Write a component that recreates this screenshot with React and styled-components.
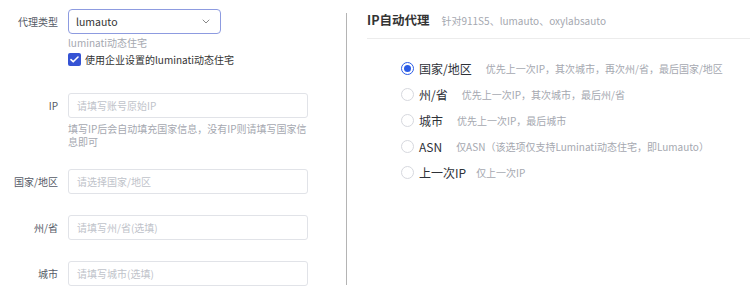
import React from 'react';
import styled, { createGlobalStyle } from 'styled-components';

const GlobalStyle = createGlobalStyle`
  html, body {
    margin: 0;
    padding: 0;
    background: #fff;
  }
  body {
    font-family: "Noto Sans CJK SC", "Noto Sans", sans-serif;
    color: #333;
  }
`;

const Page = styled.div`
  display: flex;
  width: 750px;
  height: 301px;
  box-sizing: border-box;
  overflow: hidden;
`;

const LeftPane = styled.div`
  width: 346px;
  padding-top: 9px;
  box-sizing: border-box;
`;

const Divider = styled.div`
  width: 1px;
  margin: 13px 0 16px 0;
  background: #b4b4b4;
`;

const RightPane = styled.div`
  flex: 1;
  padding-left: 20px;
  padding-top: 10px;
`;

const FormItem = styled.div`
  display: flex;
  align-items: flex-start;
  margin-bottom: ${(p) => p.$gap || 21}px;
`;

const Label = styled.div`
  width: 58px;
  flex: none;
  padding-right: 10px;
  box-sizing: content-box;
  text-align: right;
  font-size: 10px;
  line-height: 25px;
  color: #555a66;
`;

const Control = styled.div`
  width: 240px;
`;

const Select = styled.div`
  width: 153px;
  height: 25px;
  box-sizing: border-box;
  border: 1px solid #8d9be0;
  border-radius: 4px;
  display: flex;
  align-items: center;
  justify-content: space-between;
  padding: 0 10px 0 7px;
  font-size: 10.5px;
  color: #333;
`;

const Input = styled.div`
  width: 240px;
  height: 25px;
  box-sizing: border-box;
  border: 1px solid #e1e3e8;
  border-radius: 3px;
  padding: 0 8px;
  display: flex;
  align-items: center;
  font-size: 10px;
  color: #c0c3ca;
`;

const Hint = styled.div`
  margin-top: ${(p) => p.$top || 2}px;
  font-size: 10px;
  line-height: 13.5px;
  color: #a5a8b0;
`;

const CheckRow = styled.label`
  margin-top: 3px;
  margin-bottom: 4px;
  display: flex;
  align-items: center;
  gap: 4px;
  font-size: 10px;
  line-height: 14px;
  color: #333;
`;

const CheckBox = styled.span`
  width: 13px;
  height: 13px;
  border-radius: 2px;
  background: #3553d4;
  display: flex;
  align-items: center;
  justify-content: center;
`;

const Header = styled.div`
  display: flex;
  align-items: baseline;
  gap: 12px;
  padding-bottom: 9px;
  border-bottom: 1px solid #ececec;
`;

const Title = styled.div`
  font-size: 12.5px;
  font-weight: 600;
  color: #333;
`;

const SubTitle = styled.div`
  font-size: 10px;
  color: #a5a8b0;
`;

const RadioList = styled.div`
  padding: 20px 0 0 34px;
  display: flex;
  flex-direction: column;
  gap: 7px;
`;

const RadioRow = styled.div`
  display: flex;
  align-items: center;
  height: 19px;
`;

const RadioDot = styled.span`
  width: 13px;
  height: 13px;
  box-sizing: border-box;
  border-radius: 50%;
  border: 1px solid ${(p) => (p.$checked ? '#2b5ce6' : '#d6d8de')};
  display: flex;
  align-items: center;
  justify-content: center;
  margin-right: 5px;
  &::after {
    content: '';
    width: 7px;
    height: 7px;
    border-radius: 50%;
    background: ${(p) => (p.$checked ? '#2b5ce6' : 'transparent')};
  }
`;

const RadioLabel = styled.span`
  font-size: 12px;
  color: #2e3138;
  margin-right: ${(p) => p.$space}px;
`;

const RadioDesc = styled.span`
  font-size: 10px;
  color: #a5a8b0;
`;

const options = [
  { label: '国家/地区', desc: '优先上一次IP，其次城市，再次州/省，最后国家/地区', checked: true, space: 14 },
  { label: '州/省', desc: '优先上一次IP，其次城市，最后州/省', space: 14 },
  { label: '城市', desc: '优先上一次IP，最后城市', space: 14 },
  { label: 'ASN', desc: '仅ASN（该选项仅支持Luminati动态住宅，即Lumauto）', space: 14 },
  { label: '上一次IP', desc: '仅上一次IP', space: 10 },
];

function Chevron() {
  return (
    <svg width="8" height="5" viewBox="0 0 8 5" fill="none">
      <path d="M1 1l3 3 3-3" stroke="#888" strokeWidth="1" strokeLinecap="round" strokeLinejoin="round" />
    </svg>
  );
}

export default function App() {
  return (
    <Page>
      <GlobalStyle />
      <LeftPane>
        <FormItem $gap={22}>
          <Label>代理类型</Label>
          <Control>
            <Select>
              <span>lumauto</span>
              <Chevron />
            </Select>
            <Hint>luminati动态住宅</Hint>
            <CheckRow>
              <CheckBox>
                <svg width="9" height="7" viewBox="0 0 9 7" fill="none">
                  <path d="M1 3.6l2.2 2.2L8 1" stroke="#fff" strokeWidth="1.6" strokeLinecap="round" strokeLinejoin="round" />
                </svg>
              </CheckBox>
              使用企业设置的luminati动态住宅
            </CheckRow>
          </Control>
        </FormItem>
        <FormItem $gap={20}>
          <Label>IP</Label>
          <Control>
            <Input>请填写账号原始IP</Input>
            <Hint $top={4}>填写IP后会自动填充国家信息，没有IP则请填写国家信息即可</Hint>
          </Control>
        </FormItem>
        <FormItem>
          <Label>国家/地区</Label>
          <Input>请选择国家/地区</Input>
        </FormItem>
        <FormItem>
          <Label>州/省</Label>
          <Input>请填写州/省(选填)</Input>
        </FormItem>
        <FormItem>
          <Label>城市</Label>
          <Input>请填写城市(选填)</Input>
        </FormItem>
      </LeftPane>
      <Divider />
      <RightPane>
        <Header>
          <Title>IP自动代理</Title>
          <SubTitle>针对911S5、lumauto、oxylabsauto</SubTitle>
        </Header>
        <RadioList>
          {options.map((o) => (
            <RadioRow key={o.label}>
              <RadioDot $checked={o.checked} />
              <RadioLabel $space={o.space}>{o.label}</RadioLabel>
              <RadioDesc>{o.desc}</RadioDesc>
            </RadioRow>
          ))}
        </RadioList>
      </RightPane>
    </Page>
  );
}
